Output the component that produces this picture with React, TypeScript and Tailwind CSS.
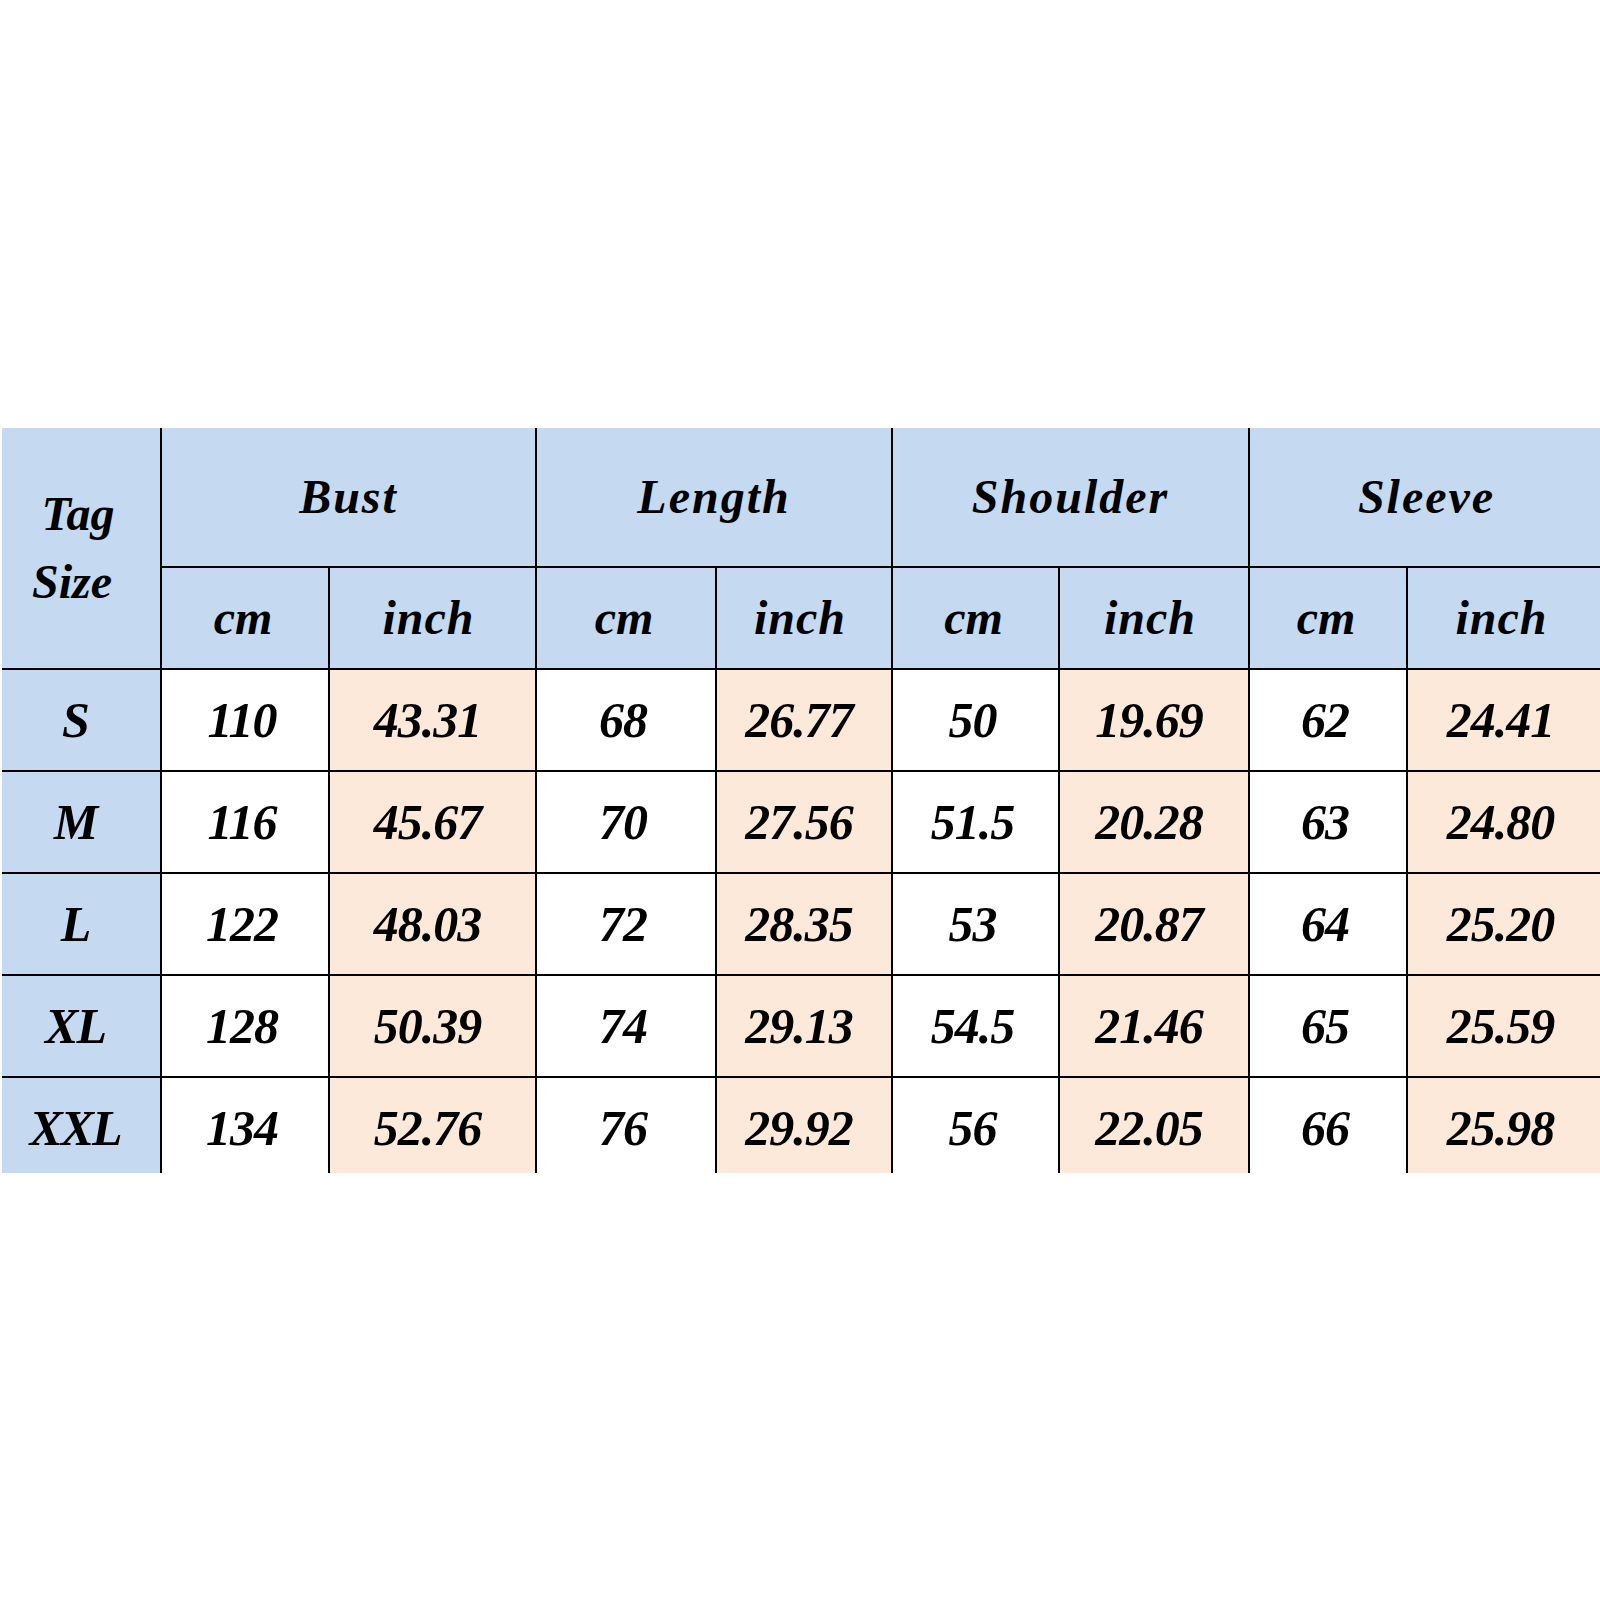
const groups = ['Bust', 'Length', 'Shoulder', 'Sleeve'];

const rows: [string, string[]][] = [
  ['S', ['110', '43.31', '68', '26.77', '50', '19.69', '62', '24.41']],
  ['M', ['116', '45.67', '70', '27.56', '51.5', '20.28', '63', '24.80']],
  ['L', ['122', '48.03', '72', '28.35', '53', '20.87', '64', '25.20']],
  ['XL', ['128', '50.39', '74', '29.13', '54.5', '21.46', '65', '25.59']],
  ['XXL', ['134', '52.76', '76', '29.92', '56', '22.05', '66', '25.98']],
];

const colWidths = [159, 168, 207, 180, 176, 167, 190, 158, 193];

export default function App() {
  return (
    <div className="min-h-[1600px] bg-white pt-[428px] pl-[2px] font-['Liberation_Serif',serif] font-bold italic text-black">
      <div className="h-[745px] w-[1598px] overflow-hidden">
        <table className="w-[1602px] table-fixed border-collapse">
          <colgroup>
            {colWidths.map((w, i) => (
              <col key={i} style={{ width: i === 8 ? w + 4 : w }} />
            ))}
          </colgroup>
          <thead>
            <tr className="h-[139px] bg-[#c5d9f1]">
              <th rowSpan={2} className="border-r-2 border-b-2 border-black text-[48px] leading-[68px] font-bold">
                <div className="pr-[6px]">Tag</div>
                <div className="pr-[18px]">Size</div>
              </th>
              {groups.map((g) => (
                <th key={g} colSpan={2} className="border-r-2 border-b-2 border-black text-[48px] font-bold tracking-[2px]">
                  {g}
                </th>
              ))}
            </tr>
            <tr className="h-[102px] bg-[#c5d9f1]">
              {groups.map((g) => [
                <th key={g + 'cm'} className="border-r-2 border-b-2 border-black pr-[4px] text-[48px] font-bold">cm</th>,
                <th key={g + 'in'} className="border-r-2 border-b-2 border-black pr-[8px] text-[48px] font-bold tracking-[1px]">inch</th>,
              ])}
            </tr>
          </thead>
          <tbody>
            {rows.map(([size, vals]) => (
              <tr key={size} className="h-[102px]">
                <td className="border-r-2 border-b-2 border-black bg-[#c5d9f1] pr-[12px] text-center text-[50px] tracking-[-2px]">{size}</td>
                {vals.map((v, i) => (
                  <td
                    key={i}
                    className={
                      i % 2 === 1
                        ? 'border-r-2 border-b-2 border-black bg-[#fde9d9] pr-[10px] text-center text-[50px] tracking-[-1px]'
                        : 'border-r-2 border-b-2 border-black bg-white pr-[6px] text-center text-[50px] tracking-[-1px]'
                    }
                  >
                    {v}
                  </td>
                ))}
              </tr>
            ))}
          </tbody>
        </table>
      </div>
    </div>
  );
}
